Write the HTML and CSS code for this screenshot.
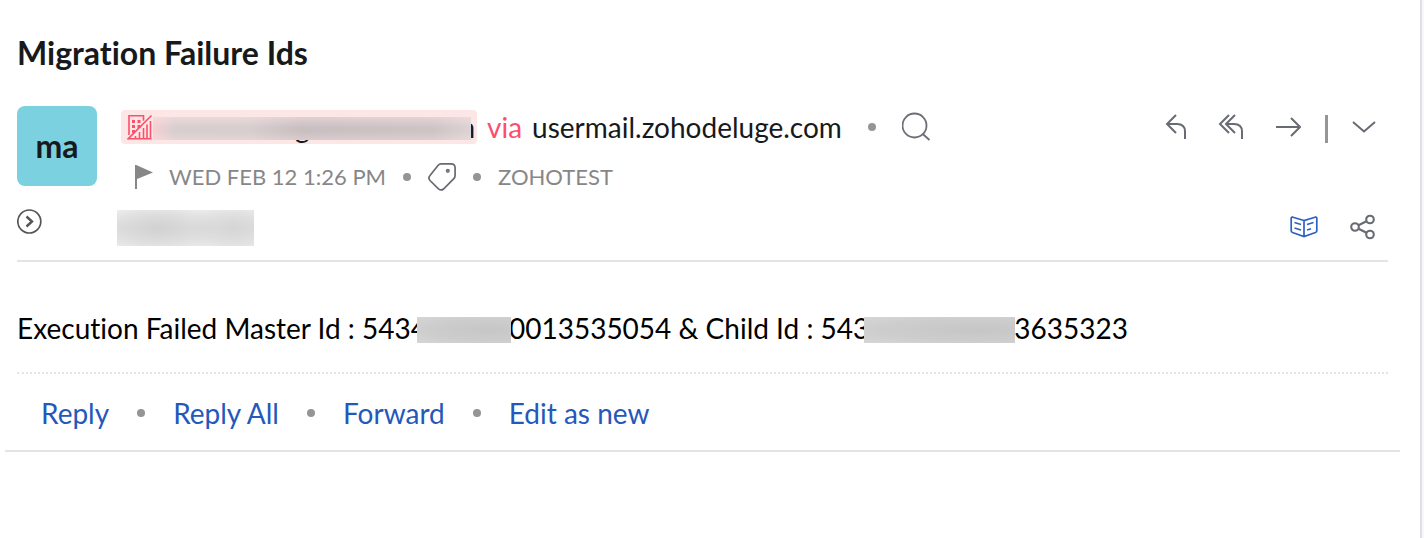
FILE: index.html
```html
<!DOCTYPE html>
<html lang="en">
<head>
<meta charset="utf-8">
<meta name="viewport" content="width=device-width, initial-scale=1">
<title>Migration Failure Ids</title>
<link rel="stylesheet" href="styles.css">
</head>
<body>
<main class="pane">
  <article class="mail">
    <h1 class="subject">Migration Failure Ids</h1>
    <header class="head">
      <div class="avatar">ma</div>
      <div class="meta">
        <div class="row sender-row">
          <div class="sender">
            <span class="chip">
              <svg class="building" viewBox="0 0 26 26" width="26" height="26" fill="none" stroke="#fb4f6c" stroke-width="1.6"><path d="M2 21V1.800h14.500v5M16.500 14v10M2 24.800h22.500M20 10.500V24M23.500 7v17M12.500 18v6M8.500 22v2"/><path d="M.5 25.500 24.500 1.500"/><path fill="#fb4f6c" stroke="none" d="M5 6h3v3H5zM10.500 6h3v3h-3zM5 11h3v3H5zM10.500 11h3v3h-3zM5 16h3v3H5z"/></svg>
              <span class="address"><span>g</span><span>n</span></span>
            </span>
            <span class="via">via</span>
            <span>usermail.zohodeluge.com</span>
          </div>
          <i class="dot"></i>
          <button class="icon" aria-label="Search"><svg viewBox="0 0 30 30" width="30" height="30" fill="none" stroke="#6b6e76" stroke-width="1.8"><circle cx="12.500" cy="13.500" r="12"/><path d="m20.800 22 6.700 6"/></svg></button>
        </div>
        <div class="row date-row">
          <svg class="flag" viewBox="0 0 20 24" width="20" height="24"><path d="M1 0h1.200L19 7.500 3 14v10H1z" fill="#878787"/></svg>
          <time>WED FEB 12 1:26 PM</time>
          <i class="dot"></i>
          <button class="icon" aria-label="Tag"><svg viewBox="0 0 28 28" width="28" height="28" fill="none" stroke="#666a72" stroke-width="1.700"><path d="M13 .9h10q4.100 0 4.100 4v7.500q0 2-1.500 3.500L15.500 26q-2.500 2-5-.2L2 17.500q-2.200-2.500 0-5l8-10Q11.300.9 13 .9z"/><circle cx="19.800" cy="7.800" r="2.100" fill="#777" stroke="none"/></svg></button>
          <i class="dot"></i>
          <span>ZOHOTEST</span>
        </div>
      </div>
      <nav class="actions" aria-label="Message actions">
        <button class="icon" aria-label="Reply"><svg viewBox="0 0 22 26" width="22" height="26"><path d="M11 1 2 10l9 9M2 10h10q8 0 8 7.500V25"/></svg></button>
        <button class="icon" aria-label="Reply all"><svg viewBox="0 0 26 26" width="26" height="26"><path d="m11 1-9 9 9 9M17 1l-9 9 9 9M8 10h8q8 0 8 7.500V25"/></svg></button>
        <button class="icon" aria-label="Forward"><svg viewBox="0 0 26 22" width="26" height="22"><path d="M1 11h23.500M16 2l9 9-9 9"/></svg></button>
        <i class="bar"></i>
        <button class="icon" aria-label="More"><svg viewBox="0 0 24 12" width="24" height="12"><path d="m1 1 11 9.500L23 1"/></svg></button>
      </nav>
      <button class="icon expand" aria-label="Show details"><svg viewBox="0 0 26 26" width="26" height="26" fill="none" stroke="#555"><circle cx="12.300" cy="12.500" r="11.500" stroke-width="1.700"/><path d="m9.500 7.500 5.500 5-5.500 5" stroke-width="2.400"/></svg></button>
      <span class="recipient"></span>
      <div class="tools">
        <button class="icon" aria-label="Reading view"><svg viewBox="0 0 28 22" width="28" height="22" fill="none" stroke="#2d60c4" stroke-width="1.700"><path d="M14 4.500 3 1.200q-1.800-.4-1.800 1v12.500q0 1.300 1.300 1.800L14 20.500l11.500-4q1.300-.5 1.300-1.800V2.200q0-1.400-1.800-1zM14 4.500v16M4.500 6.500l6.500 2M4.500 12l6.500 2M17 8.500l6.500-2M17 14l4-1.200"/></svg></button>
        <button class="icon" aria-label="Share"><svg viewBox="0 0 26 26" width="26" height="26" fill="none" stroke="#686b73" stroke-width="2.100"><circle cx="5" cy="13" r="3.800"/><circle cx="20" cy="5.500" r="3.800"/><circle cx="20" cy="20.500" r="3.800"/><path d="m8.500 11.200 8-4M8.500 14.800l8 4"/></svg></button>
      </div>
    </header>
    <p class="body">Execution Failed Master Id : 5434<i class="mask"></i>0013535054 &amp; Child Id : 543<i class="mask mask-wide"></i>3635323</p>
    <nav class="links" aria-label="Reply options">
      <a href="#reply">Reply</a><i class="dot"></i>
      <a href="#reply-all">Reply All</a><i class="dot"></i>
      <a href="#forward">Forward</a><i class="dot"></i>
      <a href="#edit">Edit as new</a>
    </nav>
  </article>
</main>
</body>
</html>
```
FILE: styles.css
```css
* { box-sizing: border-box; }

body {
  margin: 0;
  background: #f7f7fa;
  font-family: Lato, "Open Sans", sans-serif;
  font-size: 28px;
  font-variant-ligatures: none;
  line-height: 34px;
  color: #17191b;
}

.pane {
  min-height: 100vh;
  margin-right: 2px;
  padding: 33px 20px 0 5px;
  background: #fff;
  border-right: 2px solid #e0e0e8;
}

.mail { border-bottom: 2px solid #e4e4e4; }

.subject {
  margin: 0 12px 33px;
  font-size: 32px;
  line-height: 40px;
  font-weight: 700;
}

.head {
  display: grid;
  grid-template-columns: 80px 1fr auto;
  column-gap: 20px;
  margin: 0 12px;
  padding-bottom: 14px;
  border-bottom: 2px solid #e4e4e4;
}

.avatar {
  height: 80px;
  border-radius: 8px;
  background: #7bd1e0;
  font-size: 32px;
  font-weight: 700;
  line-height: 80px;
  text-align: center;
}

.meta { height: 80px; padding: 4px 0 0 4px; }

.row { display: flex; align-items: center; }

.sender-row { gap: 26px; height: 34px; }

.sender { display: flex; gap: 10px; }

.chip {
  display: flex;
  align-items: center;
  width: 356px;
  height: 34px;
  padding: 0 2px 0 6px;
  border-radius: 4px;
  background: #fde7e6;
}

.address {
  position: relative;
  flex: 1;
  display: flex;
  justify-content: space-between;
  padding-left: 142px;
}

.address::after {
  content: "";
  position: absolute;
  inset: 7px 4px 4px 0;
  background:
    linear-gradient(rgba(253, 231, 230, .45), transparent 45%, transparent 65%, rgba(253, 231, 230, .3)),
    linear-gradient(90deg, #f5d0d3, #d8ced0 7%, #d8cecf 30%, #c9bfc1 47%, #cdc3c5 75%, #cec4c6 88%, #ddd3d4);
}

.via { color: #fb4f6c; }

.dot {
  flex: none;
  width: 8px;
  height: 8px;
  border-radius: 50%;
  background: #959595;
}

.icon {
  display: flex;
  flex: none;
  padding: 0;
  border: 0;
  background: none;
  cursor: pointer;
}

.date-row {
  gap: 17px;
  height: 34px;
  margin-top: 16px;
  padding-left: 13px;
  font-size: 22px;
  color: #878787;
}

.date-row .flag { margin-right: -2px; }

.actions {
  display: flex;
  align-items: center;
  height: 42px;
  gap: 31px;
  padding-right: 12px;
}

.actions svg { fill: none; stroke: #686b73; stroke-width: 2; }

.bar { width: 3px; height: 28px; margin: 4px -7px 0; background: #959595; }

.expand { align-self: start; margin-top: 23px; }

.recipient {
  width: 137px;
  height: 36px;
  margin-top: 24px;
  background:
    radial-gradient(ellipse 45% 80% at 30% 50%, #d2d2d2, transparent),
    radial-gradient(ellipse 35% 80% at 85% 50%, #d6d6d6, transparent),
    linear-gradient(#efefef, #e0e0e0 50%, #ececec);
}

.tools {
  display: flex;
  justify-content: flex-end;
  align-items: center;
  gap: 32px;
  padding: 22px 12px 0 0;
}

.body {
  margin: 0 12px;
  padding: 49px 0 27px;
  border-bottom: 2px dotted #e4e4e4;
  color: #000;
}

.mask {
  position: relative;
  z-index: 1;
  display: inline-block;
  width: 94px;
  height: 26px;
  margin: 0 -2px 0 -10px;
  vertical-align: -4px;
  background: radial-gradient(ellipse at 75% 50%, #c6c6c6, #cdcdcd 60%, #d6d6d6);
}

.mask-wide { width: 151px; margin: 0 -1px 0 -5px; }

.links {
  display: flex;
  align-items: center;
  gap: 28px;
  padding: 22px 36px 20px;
}

.links a { color: #2458bb; text-decoration: none; }
```
